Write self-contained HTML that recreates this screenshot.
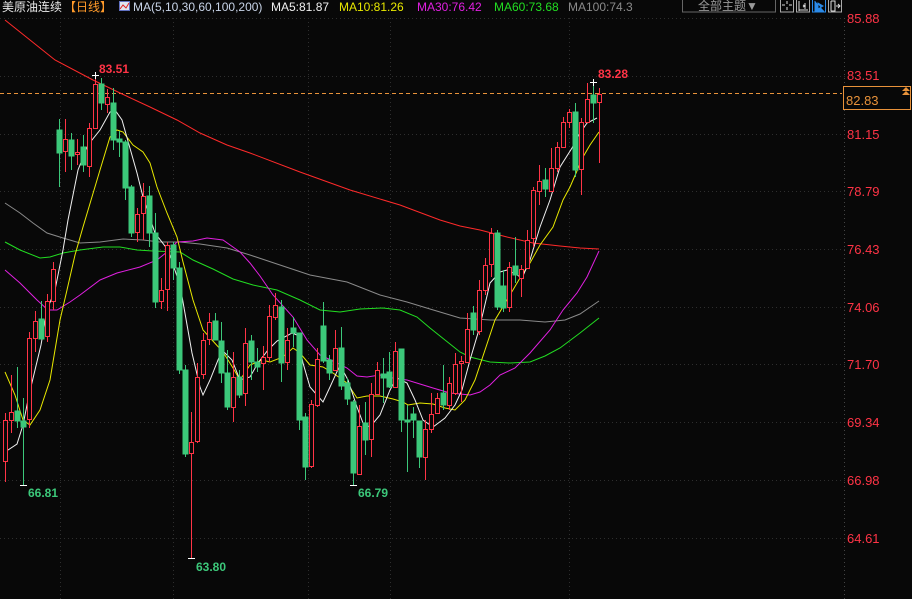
<!DOCTYPE html>
<html><head><meta charset="utf-8"><style>
html,body{margin:0;padding:0;background:#080808;width:912px;height:599px;overflow:hidden}
svg{display:block}
text{font-family:"Liberation Sans","Noto Sans CJK SC",sans-serif}
</style></head><body>
<svg width="912" height="599" viewBox="0 0 912 599" xmlns="http://www.w3.org/2000/svg">
<rect width="912" height="599" fill="#080808"/>
<g stroke="#2e2e2e" stroke-dasharray="1,3" stroke-width="1">
<line x1="0" y1="18.5" x2="845" y2="18.5"/><line x1="0" y1="76.5" x2="845" y2="76.5"/><line x1="0" y1="134.5" x2="845" y2="134.5"/><line x1="0" y1="191.5" x2="845" y2="191.5"/><line x1="0" y1="249.5" x2="845" y2="249.5"/><line x1="0" y1="307.5" x2="845" y2="307.5"/><line x1="0" y1="364.5" x2="845" y2="364.5"/><line x1="0" y1="422.5" x2="845" y2="422.5"/><line x1="0" y1="480.5" x2="845" y2="480.5"/><line x1="0" y1="538.5" x2="845" y2="538.5"/>
<line x1="60.5" y1="18" x2="60.5" y2="599"/><line x1="173.5" y1="18" x2="173.5" y2="599"/><line x1="308.5" y1="18" x2="308.5" y2="599"/><line x1="390.5" y1="18" x2="390.5" y2="599"/><line x1="569.5" y1="18" x2="569.5" y2="599"/>
<line x1="844.5" y1="18" x2="844.5" y2="599" stroke="#444"/>
</g>
<line x1="0" y1="93.5" x2="842" y2="93.5" stroke="#e8923a" stroke-dasharray="4,3"/>
<g fill="none" stroke-width="1">
<polyline stroke="#ff2a2a" points="5,20 30,40 55,60 93,80 120,93 150,107 177,120 200,133 227,145 250,153 300,172 350,190 400,205 440,220 460,226 480,230 507,237 533,243 560,246 580,248 599,249"/>
<polyline stroke="#8a8a8a" points="5,203 20,213 33,223 47,233 63,238 80,243 100,242 123,239 143,240 160,242 180,242 200,244 227,248 250,255 280,265 310,275 347,282 380,295 407,302 430,309 460,318 490,320 520,320 545,322 565,320 580,314 599,301"/>
<polyline stroke="#22dd22" points="5,242 20,250 40,258 50,257 63,253 80,250 103,247 120,247 137,250 153,251 180,252 193,260 213,269 233,279 253,285 277,290 300,300 320,310 340,312 360,309 383,308 400,310 417,317 430,328 445,340 460,352 470,357 490,362 510,363 530,362 545,356 560,348 580,333 599,318"/>
<polyline stroke="#e020e0" points="5,270 20,283 37,300 48,310 57,310 70,302 80,295 100,280 117,273 140,267 157,260 167,252 177,242 193,241 207,238 223,240 240,252 250,263 260,276 273,295 293,317 307,340 320,355 333,361 347,368 357,376 367,377 380,375 393,378 407,380 420,384 433,388 450,393 470,395 480,392 490,385 500,375 515,368 530,353 550,330 563,310 577,293 587,277 599,251"/>
<polyline stroke="#e8e800" points="5,372 15,395 23,420 30,425 40,410 50,380 60,320 67,290 75,255 83,227 100,170 110,137 117,130 123,132 133,145 143,152 150,163 157,187 167,213 177,237 183,262 193,300 203,330 212,340 223,352 233,368 240,380 250,365 262,360 270,362 283,357 293,348 300,353 310,365 323,367 333,373 347,383 357,398 367,396 380,396 393,399 403,402 408,405 420,403 433,404 445,408 455,410 465,400 475,380 485,350 495,320 507,300 520,278 530,263 540,245 553,227 563,200 570,187 583,157 590,145 599,132"/>
<polyline stroke="#f0f0f0" points="5,452 17,444 23,425 29,395 41,345 47,310 55,290 63,250 68,220 78,170 88,145 100,130 110,112 115,110 122,120 137,173 143,197 155,233 168,250 180,285 192,353 200,387 203,395 210,380 222,350 232,360 240,380 250,377 258,363 268,350 277,341 292,333 297,335 303,363 310,387 323,402 330,387 340,365 348,380 357,407 363,423 370,427 380,415 390,390 397,378 407,383 415,400 423,420 433,427 445,418 455,405 462,390 470,360 478,333 483,313 490,283 500,272 507,270 517,275 522,278 530,260 540,227 550,200 560,167 572,148 580,133 587,123 597,118"/>
</g>
<g stroke="#3cc87a" fill="#3cc87a">
<line x1="17.5" y1="367" x2="17.5" y2="428"/><rect x="15" y="411" width="5" height="10"/>
<line x1="23.5" y1="398" x2="23.5" y2="485"/><rect x="21" y="421" width="5" height="6"/>
<line x1="41.5" y1="301" x2="41.5" y2="339"/><rect x="39" y="319" width="5" height="20"/>
<line x1="59.5" y1="119" x2="59.5" y2="187"/><rect x="57" y="130" width="5" height="23"/>
<line x1="71.5" y1="133" x2="71.5" y2="170"/><rect x="69" y="140" width="5" height="16"/>
<line x1="83.5" y1="135" x2="83.5" y2="172"/><rect x="81" y="147" width="5" height="18"/>
<line x1="101.5" y1="78" x2="101.5" y2="110"/><rect x="99" y="84" width="5" height="19"/>
<line x1="113.5" y1="88" x2="113.5" y2="150"/><rect x="111" y="103" width="5" height="37"/>
<line x1="119.5" y1="131" x2="119.5" y2="157"/><rect x="117" y="139" width="5" height="3"/>
<line x1="125.5" y1="140" x2="125.5" y2="200"/><rect x="123" y="142" width="5" height="46"/>
<line x1="131.5" y1="185" x2="131.5" y2="237"/><rect x="129" y="187" width="5" height="46"/>
<line x1="149.5" y1="186" x2="149.5" y2="247"/><rect x="147" y="196" width="5" height="37"/>
<line x1="155.5" y1="213" x2="155.5" y2="308"/><rect x="153" y="233" width="5" height="69"/>
<line x1="173.5" y1="242" x2="173.5" y2="280"/><rect x="171" y="245" width="5" height="23"/>
<line x1="179.5" y1="262" x2="179.5" y2="374"/><rect x="177" y="268" width="5" height="102"/>
<line x1="185.5" y1="365" x2="185.5" y2="457"/><rect x="183" y="370" width="5" height="84"/>
<line x1="215.5" y1="313" x2="215.5" y2="340"/><rect x="213" y="321" width="5" height="19"/>
<line x1="221.5" y1="322" x2="221.5" y2="383"/><rect x="219" y="341" width="5" height="32"/>
<line x1="227.5" y1="350" x2="227.5" y2="410"/><rect x="225" y="373" width="5" height="34"/>
<line x1="239.5" y1="370" x2="239.5" y2="398"/><rect x="237" y="377" width="5" height="18"/>
<line x1="251.5" y1="335" x2="251.5" y2="380"/><rect x="249" y="341" width="5" height="21"/>
<line x1="257.5" y1="348" x2="257.5" y2="372"/><rect x="255" y="362" width="5" height="5"/>
<line x1="281.5" y1="300" x2="281.5" y2="382"/><rect x="279" y="307" width="5" height="56"/>
<line x1="293.5" y1="317" x2="293.5" y2="347"/><rect x="291" y="328" width="5" height="5"/>
<line x1="299.5" y1="333" x2="299.5" y2="430"/><rect x="297" y="333" width="5" height="87"/>
<line x1="305.5" y1="413" x2="305.5" y2="480"/><rect x="303" y="417" width="5" height="50"/>
<line x1="323.5" y1="302" x2="323.5" y2="363"/><rect x="321" y="326" width="5" height="35"/>
<line x1="329.5" y1="355" x2="329.5" y2="380"/><rect x="327" y="360" width="5" height="13"/>
<line x1="341.5" y1="327" x2="341.5" y2="390"/><rect x="339" y="348" width="5" height="38"/>
<line x1="347.5" y1="378" x2="347.5" y2="405"/><rect x="345" y="383" width="5" height="16"/>
<line x1="353.5" y1="400" x2="353.5" y2="485"/><rect x="351" y="402" width="5" height="71"/>
<line x1="365.5" y1="402" x2="365.5" y2="455"/><rect x="363" y="423" width="5" height="17"/>
<line x1="383.5" y1="358" x2="383.5" y2="403"/><rect x="381" y="374" width="5" height="4"/>
<line x1="389.5" y1="352" x2="389.5" y2="388"/><rect x="387" y="372" width="5" height="15"/>
<line x1="401.5" y1="349" x2="401.5" y2="432"/><rect x="399" y="349" width="5" height="71"/>
<line x1="407.5" y1="405" x2="407.5" y2="472"/><rect x="405" y="420" width="5" height="2"/>
<line x1="413.5" y1="407" x2="413.5" y2="438"/><rect x="411" y="414" width="5" height="6"/>
<line x1="419.5" y1="421" x2="419.5" y2="468"/><rect x="417" y="421" width="5" height="36"/>
<line x1="443.5" y1="365" x2="443.5" y2="410"/><rect x="441" y="393" width="5" height="12"/>
<line x1="473.5" y1="306" x2="473.5" y2="335"/><rect x="471" y="313" width="5" height="17"/>
<line x1="497.5" y1="230" x2="497.5" y2="310"/><rect x="495" y="233" width="5" height="74"/>
<line x1="503.5" y1="270" x2="503.5" y2="312"/><rect x="501" y="286" width="5" height="22"/>
<line x1="515.5" y1="237" x2="515.5" y2="283"/><rect x="513" y="266" width="5" height="9"/>
<line x1="545.5" y1="168" x2="545.5" y2="197"/><rect x="543" y="180" width="5" height="9"/>
<line x1="575.5" y1="103" x2="575.5" y2="177"/><rect x="573" y="112" width="5" height="58"/>
<line x1="593.5" y1="82" x2="593.5" y2="123"/><rect x="591" y="95" width="5" height="8"/>
</g>
<g stroke="#ff3446" fill="#080808">
<line x1="5.5" y1="413" x2="5.5" y2="482"/><rect x="3.5" y="420.5" width="4" height="41"/>
<line x1="11.5" y1="375" x2="11.5" y2="433"/><rect x="9.5" y="412.5" width="4" height="8"/>
<line x1="29.5" y1="332" x2="29.5" y2="428"/><rect x="27.5" y="338.5" width="4" height="81"/>
<line x1="35.5" y1="311" x2="35.5" y2="352"/><rect x="33.5" y="321.5" width="4" height="17"/>
<line x1="47.5" y1="294" x2="47.5" y2="342"/><rect x="45.5" y="301.5" width="4" height="35"/>
<line x1="53.5" y1="262" x2="53.5" y2="310"/><rect x="51.5" y="269.5" width="4" height="32"/>
<line x1="65.5" y1="119" x2="65.5" y2="172"/><rect x="63.5" y="139.5" width="4" height="12"/>
<line x1="77.5" y1="139" x2="77.5" y2="165"/><rect x="75.5" y="152.5" width="4" height="2"/>
<line x1="89.5" y1="123" x2="89.5" y2="177"/><rect x="87.5" y="128.5" width="4" height="38"/>
<line x1="95.5" y1="75" x2="95.5" y2="129"/><rect x="93.5" y="84.5" width="4" height="44"/>
<line x1="107.5" y1="89" x2="107.5" y2="113"/><rect x="105.5" y="97.5" width="4" height="7"/>
<line x1="137.5" y1="208" x2="137.5" y2="242"/><rect x="135.5" y="214.5" width="4" height="18"/>
<line x1="143.5" y1="183" x2="143.5" y2="240"/><rect x="141.5" y="196.5" width="4" height="17"/>
<line x1="161.5" y1="278" x2="161.5" y2="309"/><rect x="159.5" y="290.5" width="4" height="11"/>
<line x1="167.5" y1="242" x2="167.5" y2="311"/><rect x="165.5" y="245.5" width="4" height="44"/>
<line x1="191.5" y1="412" x2="191.5" y2="558"/><rect x="189.5" y="442.5" width="4" height="11"/>
<line x1="197.5" y1="363" x2="197.5" y2="443"/><rect x="195.5" y="377.5" width="4" height="64"/>
<line x1="203.5" y1="333" x2="203.5" y2="379"/><rect x="201.5" y="340.5" width="4" height="34"/>
<line x1="209.5" y1="313" x2="209.5" y2="345"/><rect x="207.5" y="322.5" width="4" height="17"/>
<line x1="233.5" y1="352" x2="233.5" y2="422"/><rect x="231.5" y="377.5" width="4" height="30"/>
<line x1="245.5" y1="328" x2="245.5" y2="406"/><rect x="243.5" y="343.5" width="4" height="50"/>
<line x1="263.5" y1="346" x2="263.5" y2="390"/><rect x="261.5" y="357.5" width="4" height="6"/>
<line x1="269.5" y1="305" x2="269.5" y2="362"/><rect x="267.5" y="316.5" width="4" height="41"/>
<line x1="275.5" y1="293" x2="275.5" y2="320"/><rect x="273.5" y="305.5" width="4" height="12"/>
<line x1="287.5" y1="328" x2="287.5" y2="370"/><rect x="285.5" y="340.5" width="4" height="22"/>
<line x1="311.5" y1="400" x2="311.5" y2="468"/><rect x="309.5" y="404.5" width="4" height="62"/>
<line x1="317.5" y1="348" x2="317.5" y2="407"/><rect x="315.5" y="359.5" width="4" height="46"/>
<line x1="335.5" y1="330" x2="335.5" y2="370"/><rect x="333.5" y="348.5" width="4" height="22"/>
<line x1="359.5" y1="405" x2="359.5" y2="474"/><rect x="357.5" y="426.5" width="4" height="48"/>
<line x1="371.5" y1="383" x2="371.5" y2="457"/><rect x="369.5" y="394.5" width="4" height="45"/>
<line x1="377.5" y1="362" x2="377.5" y2="394"/><rect x="375.5" y="370.5" width="4" height="24"/>
<line x1="395.5" y1="342" x2="395.5" y2="387"/><rect x="393.5" y="351.5" width="4" height="36"/>
<line x1="425.5" y1="420" x2="425.5" y2="480"/><rect x="423.5" y="429.5" width="4" height="28"/>
<line x1="431.5" y1="393" x2="431.5" y2="433"/><rect x="429.5" y="414.5" width="4" height="15"/>
<line x1="437.5" y1="393" x2="437.5" y2="413"/><rect x="435.5" y="398.5" width="4" height="15"/>
<line x1="449.5" y1="377" x2="449.5" y2="410"/><rect x="447.5" y="383.5" width="4" height="22"/>
<line x1="455.5" y1="353" x2="455.5" y2="395"/><rect x="453.5" y="364.5" width="4" height="29"/>
<line x1="461.5" y1="356" x2="461.5" y2="402"/><rect x="459.5" y="361.5" width="4" height="2"/>
<line x1="467.5" y1="313" x2="467.5" y2="362"/><rect x="465.5" y="329.5" width="4" height="33"/>
<line x1="479.5" y1="280" x2="479.5" y2="335"/><rect x="477.5" y="290.5" width="4" height="41"/>
<line x1="485.5" y1="258" x2="485.5" y2="295"/><rect x="483.5" y="265.5" width="4" height="25"/>
<line x1="491.5" y1="228" x2="491.5" y2="277"/><rect x="489.5" y="233.5" width="4" height="31"/>
<line x1="509.5" y1="262" x2="509.5" y2="312"/><rect x="507.5" y="267.5" width="4" height="40"/>
<line x1="521.5" y1="265" x2="521.5" y2="297"/><rect x="519.5" y="269.5" width="4" height="9"/>
<line x1="527.5" y1="230" x2="527.5" y2="268"/><rect x="525.5" y="240.5" width="4" height="28"/>
<line x1="533.5" y1="187" x2="533.5" y2="247"/><rect x="531.5" y="190.5" width="4" height="48"/>
<line x1="539.5" y1="165" x2="539.5" y2="205"/><rect x="537.5" y="181.5" width="4" height="10"/>
<line x1="551.5" y1="148" x2="551.5" y2="191"/><rect x="549.5" y="168.5" width="4" height="23"/>
<line x1="557.5" y1="142" x2="557.5" y2="172"/><rect x="555.5" y="147.5" width="4" height="21"/>
<line x1="563.5" y1="117" x2="563.5" y2="147"/><rect x="561.5" y="122.5" width="4" height="25"/>
<line x1="569.5" y1="109" x2="569.5" y2="128"/><rect x="567.5" y="112.5" width="4" height="10"/>
<line x1="581.5" y1="118" x2="581.5" y2="195"/><rect x="579.5" y="122.5" width="4" height="47"/>
<line x1="587.5" y1="83" x2="587.5" y2="122"/><rect x="585.5" y="99.5" width="4" height="23"/>
<line x1="599.5" y1="88" x2="599.5" y2="163"/><rect x="597.5" y="94.5" width="4" height="8"/>
</g>
<g stroke="#fff" stroke-width="1">
<path d="M92 75.5h7M95.5 72v7"/><path d="M590 82.5h7M593.5 79v7"/>
<path d="M20 485.5h7"/><path d="M188 558.5h7"/><path d="M350 485.5h7"/>
</g>
<g font-size="12" font-weight="bold">
<text x="99" y="73" fill="#ff3446">83.51</text>
<text x="598" y="78" fill="#ff3446">83.28</text>
<text x="28" y="497" fill="#3cc87a">66.81</text>
<text x="196" y="571" fill="#3cc87a">63.80</text>
<text x="358" y="497" fill="#3cc87a">66.79</text>
</g>
<g font-size="13" fill="#ff3446">
<text x="847" y="23">85.88</text><text x="847" y="80">83.51</text><text x="847" y="139">81.15</text><text x="847" y="196">78.79</text><text x="847" y="254">76.43</text><text x="847" y="312">74.06</text><text x="847" y="369">71.70</text><text x="847" y="427">69.34</text><text x="847" y="485">66.98</text><text x="847" y="543">64.61</text>
</g>
<rect x="843.5" y="86.5" width="67" height="23" fill="#080808" stroke="#e8923a"/>
<text x="846" y="105" font-size="13" fill="#e8923a">82.83</text>
<path d="M902 91l4-4 4 4zM902 95l4-4 4 4z" fill="#e8923a"/>
<g font-size="12">
<text x="2" y="11" fill="#e8e8e8">美原油连续</text>
<text x="64" y="11" fill="#ff9a2a">【日线】</text>
<rect x="119.5" y="1.5" width="10" height="9" fill="#dfe4f0" stroke="#6070c0"/>
<path d="M120 9l3-4 3 3 3-5" stroke="#e02020" fill="none"/>
<text x="133" y="11" fill="#c8d4e8">MA(5,10,30,60,100,200)</text>
<text x="271" y="11" fill="#f0f0f0">MA5:81.87</text>
<text x="339" y="11" fill="#e8e800">MA10:81.26</text>
<text x="417" y="11" fill="#e020e0">MA30:76.42</text>
<text x="494" y="11" fill="#22dd22">MA60:73.68</text>
<text x="568" y="11" fill="#8a8a8a">MA100:74.3</text>
</g>
<rect x="682.5" y="-1" width="93" height="13" fill="#080808" stroke="#666"/>
<text x="698" y="10" font-size="12" fill="#9a9a9a">全部主题▼</text>
<g fill="none" stroke="#aaa">
<rect x="780.5" y="-1" width="13" height="13"/><rect x="796.5" y="-1" width="13" height="13"/><rect x="812.5" y="-1" width="13" height="13" stroke="#2a8ae8"/><rect x="828.5" y="-1" width="13" height="13"/>
<path d="M787 1v3M787 7v3M782 5h3M789 5h3" stroke="#ddd"/>
<path d="M799 1v10M805 3v6M799 10h9M803 5l2 1-2 1" stroke="#ddd"/>
<path d="M815 1v10h9M818 3l5 3-5 3z" stroke="#2a8ae8" fill="#2a8ae8"/>
<path d="M831 1v10M831 1h4v10h-4M836 6h4M838 4l2 2-2 2" stroke="#ddd"/>
</g>
</svg>
</body></html>
